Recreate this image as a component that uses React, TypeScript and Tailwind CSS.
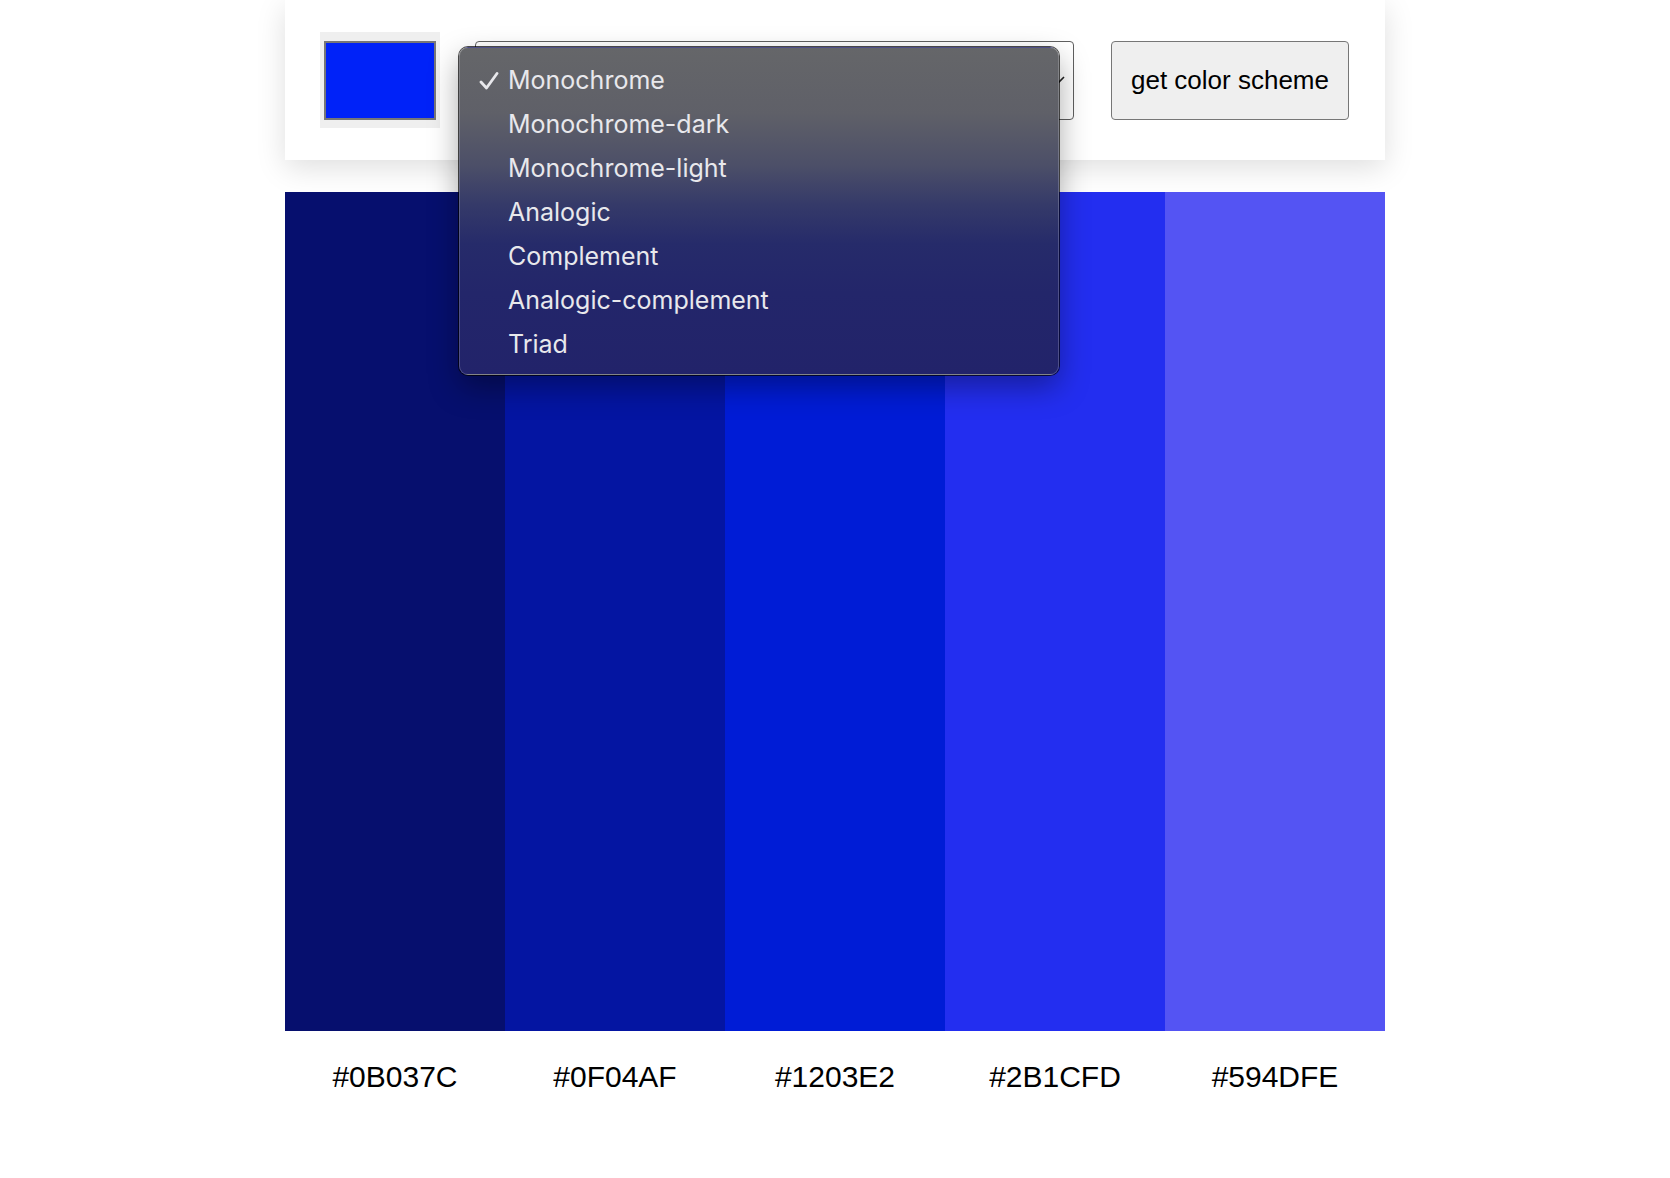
import { useState } from 'react';

// Palette returned for the current seed colour
const palette = [
  { hex: '#0B037C', shown: '#060F6E' },
  { hex: '#0F04AF', shown: '#0415A2' },
  { hex: '#1203E2', shown: '#001CD6' },
  { hex: '#2B1CFD', shown: '#232EF0' },
  { hex: '#594DFE', shown: '#5454F3' },
];

const schemes = [
  'Monochrome',
  'Monochrome-dark',
  'Monochrome-light',
  'Analogic',
  'Complement',
  'Analogic-complement',
  'Triad',
];

export default function App() {
  const [mode] = useState('Monochrome');

  return (
    <main className="min-h-screen bg-white flex justify-center font-['Liberation_Sans',Arial,sans-serif] text-black">
      <div className="relative w-[1100px]">
        {/* Header controls */}
        <header className="h-[160px] bg-white shadow-[0_8px_28px_rgba(0,0,0,0.13)] flex items-center px-[35px]">
          <div className="w-[120px] h-[96px] bg-[#efefef] flex items-center justify-center">
            <div className="w-[112px] h-[79px] border-2 border-[#777777] bg-[#0022f8]" />
          </div>
          <div className="ml-[35px] w-[599px] h-[79px] bg-white border border-[#5f5f5f] rounded-[4px] flex items-center justify-end pr-[8px]">
            <svg width="14" height="10" viewBox="0 0 14 10" fill="none">
              <path d="M1 2 L7 8 L13 2" stroke="#222" strokeWidth="1.6" />
            </svg>
          </div>
          <button className="ml-[37px] w-[238px] h-[79px] bg-[#efefef] border border-[#767676] rounded-[4px] text-[26px]">
            get color scheme
          </button>
        </header>

        {/* Colour columns */}
        <section className="mt-[32px] grid grid-cols-5 h-[839px]">
          {palette.map((c) => (
            <div key={c.hex} style={{ backgroundColor: c.shown }} />
          ))}
        </section>

        <section className="grid grid-cols-5 mt-[28px]">
          {palette.map((c) => (
            <p key={c.hex} className="text-center text-[30px] leading-[36px]">
              {c.hex}
            </p>
          ))}
        </section>

        {/* Native select popup (open) */}
        <div className="absolute left-[174px] top-[47px] w-[600px] h-[328px] rounded-[9px] border border-[rgba(255,255,255,0.2)] ring-1 ring-black/70 bg-[linear-gradient(180deg,#656669_0%,#5f6068_20%,#4c4f68_36%,#353a69_48%,#262b6a_60%,#23266a_75%,#22236a_100%)] shadow-[0_12px_30px_rgba(0,0,0,0.35)] pt-[11px] pb-[8px] font-['Inter',sans-serif] text-[#e8e8ec]">
          {schemes.map((s) => (
            <div key={s} className="relative h-[44px] flex items-center pl-[48px] text-[25px]">
              {s === mode && (
                <svg className="absolute left-[19px] top-[13px]" width="20" height="18" viewBox="0 0 20 18" fill="none">
                  <path d="M2 10 L7.5 16 L18 1.5" stroke="#e8e8ec" strokeWidth="2.8" strokeLinecap="round" strokeLinejoin="round" />
                </svg>
              )}
              {s}
            </div>
          ))}
        </div>
      </div>
    </main>
  );
}
